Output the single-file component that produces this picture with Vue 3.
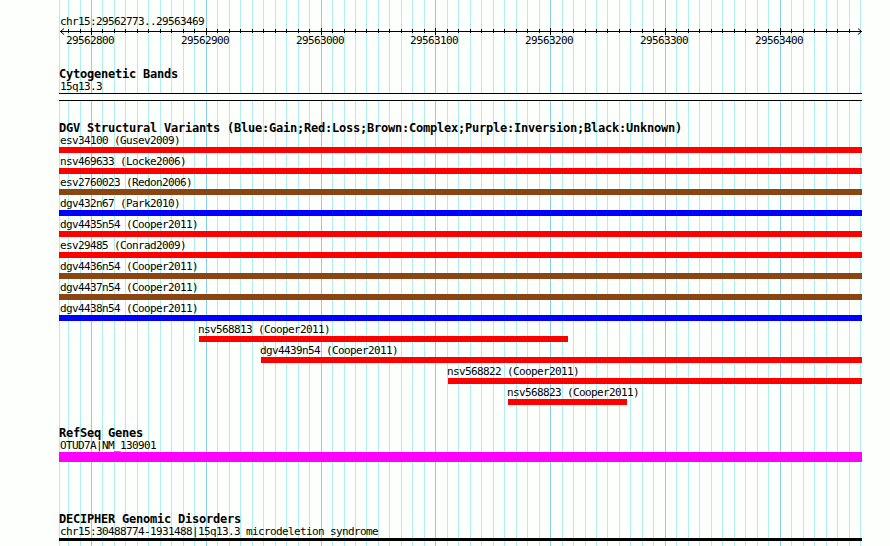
<script setup>
const regionStart = 29562773;
const regionEnd = 29563469;
// drawing scale of the panel, 800px for the whole region
const pxPerBase = 800 / (regionEnd - regionStart + 1);

// Turn a genomic position into an x coordinate inside the panel
function toX(position) {
  return Math.max(0, Math.round(1 + (position - regionStart) * pxPerBase));
}

const gridLines = [];
for (let position = 29562770; position <= 29563470; position += 10) {
  gridLines.push({ position, x: toX(position), isMajor: position % 100 === 0 });
}
const ticks = gridLines.filter((line) => line.x > 1 && line.x < 800);
const majorTicks = ticks.filter((line) => line.isMajor);

// start, end and labelX are in panel pixels
const tracks = [
  {
    id: 'cytoband',
    title: 'Cytogenetic Bands',
    features: [{ name: '15q13.3', start: 0, end: 803, labelX: 1, type: 'band' }],
  },
  {
    id: 'variants',
    title: 'DGV Structural Variants (Blue:Gain;Red:Loss;Brown:Complex;Purple:Inversion;Black:Unknown)',
    features: [
      { name: 'esv34100 (Gusev2009)', start: 0, end: 803, labelX: 1, type: 'loss' },
      { name: 'nsv469633 (Locke2006)', start: 0, end: 803, labelX: 1, type: 'loss' },
      { name: 'esv2760023 (Redon2006)', start: 0, end: 803, labelX: 1, type: 'complex' },
      { name: 'dgv432n67 (Park2010)', start: 0, end: 803, labelX: 1, type: 'gain' },
      { name: 'dgv4435n54 (Cooper2011)', start: 0, end: 803, labelX: 1, type: 'loss' },
      { name: 'esv29485 (Conrad2009)', start: 0, end: 803, labelX: 1, type: 'loss' },
      { name: 'dgv4436n54 (Cooper2011)', start: 0, end: 803, labelX: 1, type: 'complex' },
      { name: 'dgv4437n54 (Cooper2011)', start: 0, end: 803, labelX: 1, type: 'complex' },
      { name: 'dgv4438n54 (Cooper2011)', start: 0, end: 803, labelX: 1, type: 'gain' },
      { name: 'nsv568813 (Cooper2011)', start: 140, end: 509, labelX: 139, type: 'loss' },
      { name: 'dgv4439n54 (Cooper2011)', start: 202, end: 803, labelX: 201, type: 'loss' },
      { name: 'nsv568822 (Cooper2011)', start: 389, end: 803, labelX: 388, type: 'loss' },
      { name: 'nsv568823 (Cooper2011)', start: 449, end: 568, labelX: 448, type: 'loss' },
    ],
  },
  {
    id: 'genes',
    title: 'RefSeq Genes',
    features: [{ name: 'OTUD7A|NM_130901', start: 0, end: 803, labelX: 1, type: 'gene' }],
  },
  {
    id: 'decipher',
    title: 'DECIPHER Genomic Disorders',
    features: [
      { name: 'chr15:30488774-1931488|15q13.3 microdeletion syndrome', start: 0, end: 803, labelX: 1, type: 'disorder' },
    ],
  },
];
</script>

<template>
  <div class="browser">
    <div class="panel">
      <svg class="grid" width="803" height="546" shape-rendering="crispEdges">
        <rect
          v-for="line in gridLines"
          :key="line.position"
          :class="line.isMajor ? 'major' : 'minor'"
          :x="line.x"
          y="0"
          width="1"
          height="546"
        />
      </svg>

      <header class="ruler">
        <div class="label region">chr15:{{ regionStart }}..{{ regionEnd }}</div>
        <svg class="scale" width="803" height="18">
          <g shape-rendering="crispEdges">
            <rect x="1" y="3" width="802" height="1" />
            <rect
              v-for="tick in ticks"
              :key="tick.position"
              :x="tick.x"
              :y="tick.isMajor ? 0 : 1"
              width="1"
              :height="tick.isMajor ? 7 : 4"
            />
          </g>
          <path class="arrow" d="M5 0.5 L1.5 3.5 L5 6.5" />
          <path class="arrow" d="M799 0.5 L802.5 3.5 L799 6.5" />
          <text
            v-for="tick in majorTicks"
            :key="tick.position"
            class="label"
            :x="tick.x - 25"
            y="16"
          >{{ tick.position }}</text>
        </svg>
      </header>

      <section v-for="track in tracks" :key="track.id" class="track" :class="track.id">
        <h2 class="title">{{ track.title }}</h2>
        <div v-for="feature in track.features" :key="feature.name" class="feature">
          <div class="label" :style="{ marginLeft: `${feature.labelX}px` }">{{ feature.name }}</div>
          <div
            class="bar"
            :class="feature.type"
            :style="{ marginLeft: `${feature.start}px`, width: `${feature.end - feature.start}px` }"
          />
        </div>
      </section>
    </div>
  </div>
</template>

<style>
body {
  margin: 0;
  background-color: #fdfffc;
}
</style>

<style scoped>
.browser {
  height: 546px;
  padding-left: 59px;
  overflow: hidden;
  box-sizing: border-box;
  background-color: #fdfffc;
  color: #000;
}

.panel {
  position: relative;
  width: 803px;
  height: 546px;
  padding-top: 15px;
  box-sizing: border-box;
}

.grid {
  position: absolute;
  top: 0;
  left: 0;
}

.minor {
  fill: #afeeee;
}

.major {
  fill: #87ceeb;
}

.ruler, .track {
  position: relative;
}

.ruler {
  height: 31px;
  margin-bottom: 21px;
}

.region {
  margin-left: 1px;
}

.scale {
  display: block;
  margin-top: 1px;
}

.arrow {
  fill: none;
  stroke: #000;
  stroke-width: 1;
}

.label {
  font-family: "DejaVu Sans Mono", "Liberation Mono", monospace;
  font-size: 11px;
  line-height: 14px;
  letter-spacing: -0.622px;
  white-space: pre;
}

/* the line is taller than its box, so the text sits close to its bar */
div.label {
  height: 12px;
}

.title {
  height: 13px;
  margin: 0;
  font-family: "DejaVu Sans Mono", "Liberation Mono", monospace;
  font-size: 12px;
  font-weight: bold;
  line-height: 15px;
  letter-spacing: -0.224px;
  white-space: pre;
}

.feature + .feature {
  margin-top: 2px;
}

.bar {
  height: 6px;
  margin-top: 1px;
}

.loss {
  background-color: #ff0000;
}

.gain {
  background-color: #0000ff;
}

.complex {
  background-color: #8b4513;
}

.band {
  height: 8px;
  box-sizing: border-box;
  border-top: 1px solid #000;
  border-bottom: 1px solid #000;
  background-color: #fdfffc;
}

.gene {
  height: 10px;
  background-color: #ff00ff;
}

.disorder {
  height: 3px;
  background-color: #000;
}

.cytoband {
  margin-bottom: 20px;
}

.variants {
  margin-bottom: 21px;
}

.genes {
  margin-bottom: 50px;
}
</style>
